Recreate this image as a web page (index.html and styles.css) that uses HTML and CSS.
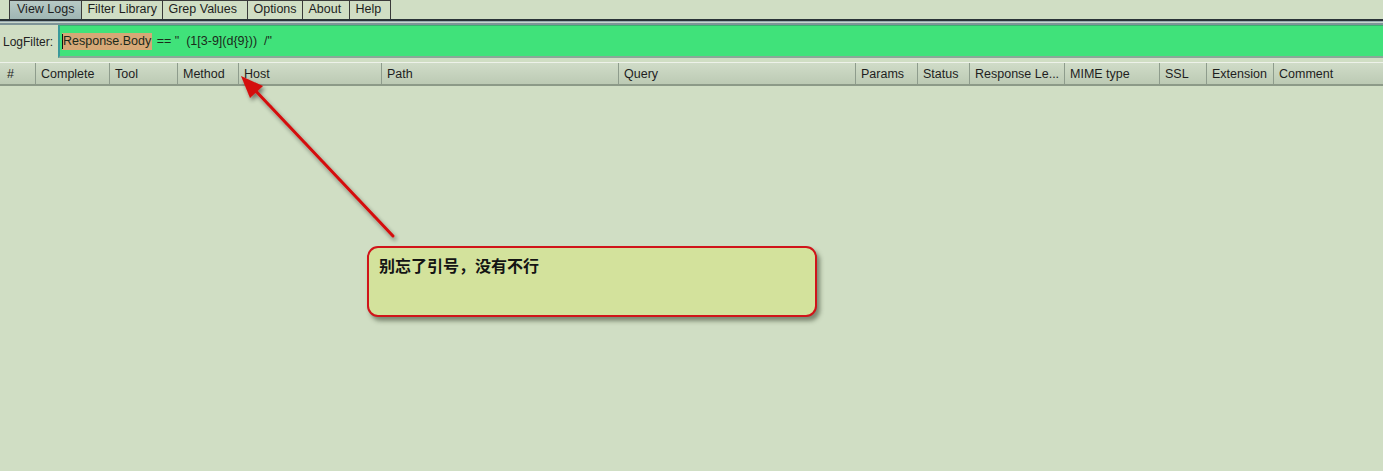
FILE: index.html
```html
<!DOCTYPE html>
<html>
<head>
<meta charset="utf-8">
<link rel="stylesheet" href="styles.css">
</head>
<body>
<div class="app">
  <div class="tabs">
    <div class="tab active">View Logs</div>
    <div class="tab">Filter Library</div>
    <div class="tab">Grep Values</div>
    <div class="tab">Options</div>
    <div class="tab">About</div>
    <div class="tab">Help</div>
  </div>
  <div class="sep"></div>
  <div class="filter-row">
    <span class="label">LogFilter:</span>
    <div class="filter-box"><span class="caret"></span><span class="hl">Response.Body</span><span class="rest"> == "&nbsp; (1[3-9](d{9}))&nbsp; /"</span></div>
  </div>
  <div class="header">
    <div class="col" style="width:33px">#</div>
    <div class="col" style="width:74px">Complete</div>
    <div class="col" style="width:68px">Tool</div>
    <div class="col" style="width:61px">Method</div>
    <div class="col" style="width:143px">Host</div>
    <div class="col" style="width:237px">Path</div>
    <div class="col" style="width:237px">Query</div>
    <div class="col" style="width:62px">Params</div>
    <div class="col" style="width:52px">Status</div>
    <div class="col" style="width:95px">Response Le...</div>
    <div class="col" style="width:95px">MIME type</div>
    <div class="col" style="width:47px">SSL</div>
    <div class="col" style="width:67px">Extension</div>
    <div class="col last">Comment</div>
  </div>
  <div class="body"></div>

  <svg class="arrow" width="1383" height="471" viewBox="0 0 1383 471">
    <defs>
      <filter id="sh" x="-20%" y="-20%" width="140%" height="140%">
        <feGaussianBlur in="SourceAlpha" stdDeviation="2"/>
        <feOffset dx="2" dy="3" result="b"/>
        <feComponentTransfer><feFuncA type="linear" slope="0.45"/></feComponentTransfer>
        <feMerge><feMergeNode/><feMergeNode in="SourceGraphic"/></feMerge>
      </filter>
    </defs>
    <g filter="url(#sh)">
      <line x1="393" y1="236" x2="252" y2="87" stroke="#d40c0c" stroke-width="3" stroke-linecap="round"/>
      <polygon points="241,76 263,86 250,98" fill="#d40c0c"/>
    </g>
  </svg>

  <div class="callout">别忘了引号，没有不行</div>
</div>
</body>
</html>
```

FILE: styles.css
```css
* { box-sizing: border-box; }
html, body { margin: 0; padding: 0; }
body {
  width: 1383px;
  height: 471px;
  overflow: hidden;
  background: #d0dec4;
  font-family: "Liberation Sans", Arial, sans-serif;
  font-size: 12px;
  color: #1a1a1a;
}
.app {
  position: relative;
  width: 1383px;
  height: 471px;
  background: #d0dec4;
}
.tabs {
  display: flex;
  height: 19px;
  padding-left: 9px;
}
.tab {
  height: 19px;
  padding: 0 5px;
  border: 1px solid #3a3a3a;
  border-bottom: none;
  margin-right: -1px;
  line-height: 17px;
  font-size: 12.5px;
  color: #1e1e1e;
  background: #d0dec4;
}
.tab.active {
  background: linear-gradient(#b8cac6, #9fb6b3);
  padding: 0 7px;
}
.tab:nth-child(2) { width: 82px; }
.tab:nth-child(3) { width: 86px; }
.tab:nth-child(4) { width: 56px; }
.tab:nth-child(5) { width: 48px; }
.tab:nth-child(6) { width: 42px; }
.sep {
  height: 6px;
  border-top: 2px solid #2a3338;
  background: linear-gradient(#98aab0 0, #98aab0 1px, #c8d6cc 1px, #c8d6cc 2px, #7e9498 2px, #7e9498 4px);
}
.filter-row {
  display: flex;
  align-items: center;
  height: 33px;
}
.label {
  width: 58px;
  padding-left: 3px;
  color: #222;
  font-size: 12px;
}
.filter-box {
  flex: 1;
  height: 33px;
  background: #40e27a;
  border-left: 2px solid #3a9a9a;
  border-top: 1px solid #3ab070;
  border-bottom: 2px solid #8aa898;
  display: flex;
  align-items: center;
  padding-left: 2px;
  font-size: 12.5px;
  color: #1b2a1b;
}
.caret {
  width: 1px;
  height: 15px;
  background: #111;
  margin-right: -1px;
  position: relative;
  z-index: 1;
}
.hl {
  background: #d6a876;
  padding: 1px 1px 1px 1px;
  line-height: 15px;
}
.rest { white-space: pre; padding-left: 1px; }
.header {
  display: flex;
  margin-top: 4px;
  height: 24px;
  border-top: 1px solid #eef2ea;
  border-bottom: 2px solid #8c9a88;
  background: linear-gradient(#d0dcc8, #bccab4);
}
.col {
  flex: none;
  height: 100%;
  border-right: 1px solid #8e9c8c;
  padding-left: 5px;
  line-height: 22px;
  font-size: 12.5px;
  color: #1e1e1e;
  white-space: nowrap;
  overflow: hidden;
}
.col:first-child { width: 36px !important; padding-left: 7px; }
.col.last { flex: 1; border-right: none; }
.body { height: 385px; background: #d0dec4; }
.arrow {
  position: absolute;
  left: 0;
  top: 0;
  pointer-events: none;
}
.callout {
  position: absolute;
  left: 367px;
  top: 246px;
  width: 450px;
  height: 71px;
  background: #d3e29c;
  border: 2px solid #d0141a;
  border-radius: 11px;
  box-shadow: 3px 4px 4px rgba(40, 50, 30, 0.5);
  padding: 6px 0 0 10px;
  font-family: "Noto Sans CJK SC", sans-serif;
  font-weight: bold;
  font-size: 16px;
  line-height: 22px;
  color: #141414;
}
```
